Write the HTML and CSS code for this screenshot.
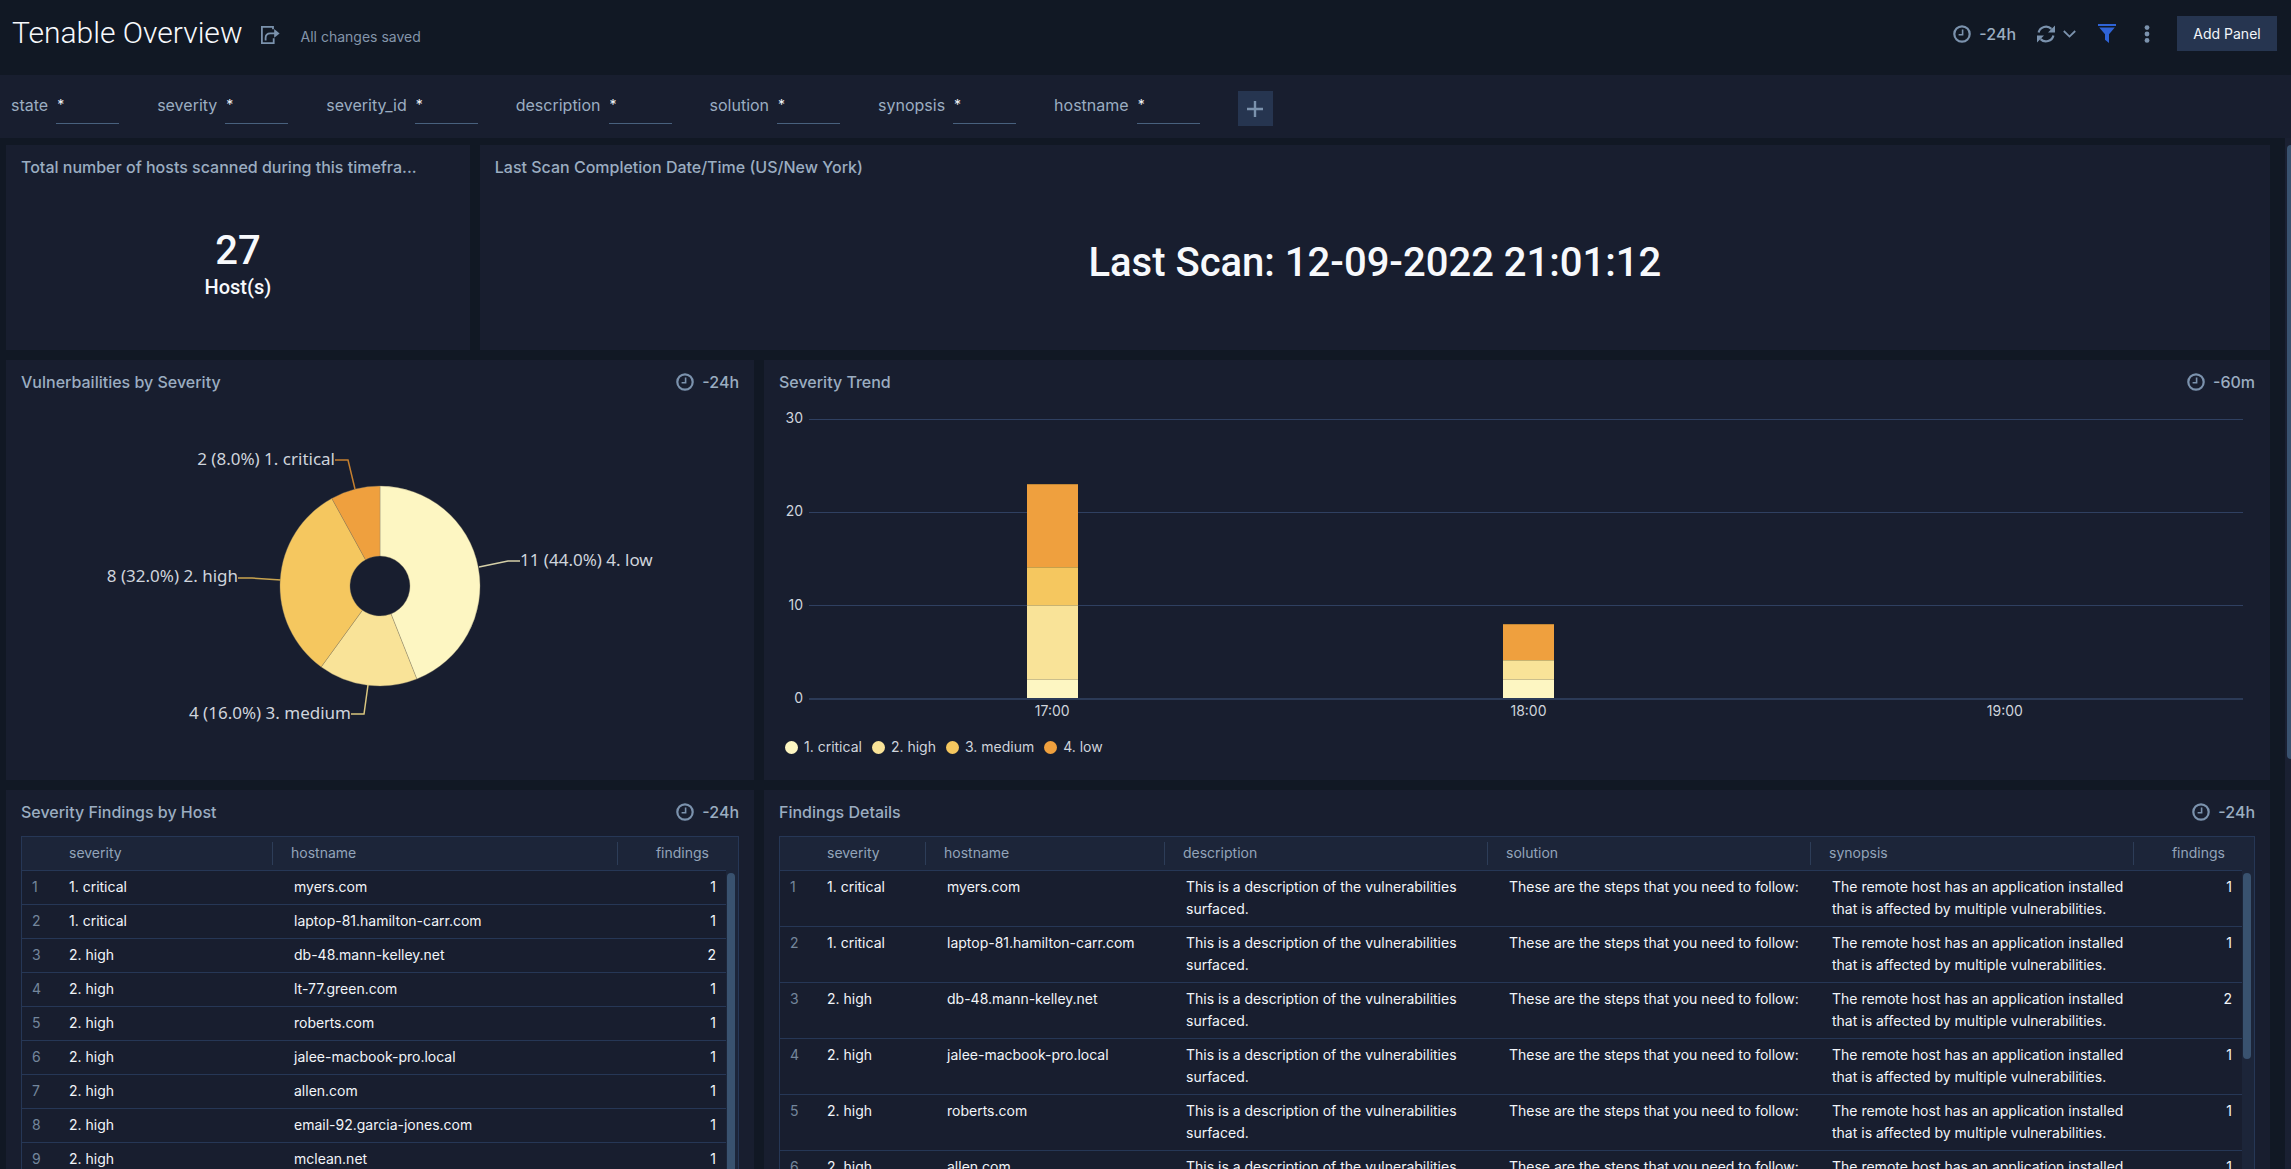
FILE: index.html
```
<!DOCTYPE html>
<html lang="en">
<head>
<meta charset="utf-8">
<meta name="viewport" content="width=device-width, initial-scale=1">
<title>Tenable Overview</title>
<link rel="stylesheet" href="styles.css">
</head>
<body>
<svg class="sprite" aria-hidden="true">
  <symbol id="clock" viewBox="0 0 18 18">
    <circle cx="9" cy="9" r="7.7" fill="none" stroke="currentColor" stroke-width="2.2"/>
    <path d="M9.6 4.6V9.7H5.6" fill="none" stroke="currentColor" stroke-width="1.6"/>
  </symbol>
</svg>

<header class="topbar">
  <h1 class="topbar-title">Tenable Overview</h1>
  <button class="icon-button share" type="button" aria-label="Share">
    <svg width="19" height="18" viewBox="0 0 19 18" fill="none" stroke="currentColor" stroke-width="1.8">
      <path d="M12 3.2V.9H.9V17.1H12.7V12.2"/>
      <path d="M4.6 14.6V12C4.6 9 6.4 7.4 9.4 7.4H14"/>
      <path d="M13.2 2.9 18.6 7.4 13.2 11.8Z" fill="currentColor" stroke="none"/>
    </svg>
  </button>
  <span class="save-state">All changes saved</span>
  <div class="topbar-actions">
    <button class="time-button" type="button"><svg class="clock"><use href="#clock"/></svg>-24h</button>
    <button class="icon-button refresh" type="button" aria-label="Refresh">
      <svg width="18" height="18" viewBox="0 0 18 18" fill="none" stroke="currentColor" stroke-width="2.2">
        <path d="M1.6 7.6A7.6 7.6 0 0 1 14.4 3.9"/>
        <path d="M16.4 10.4A7.6 7.6 0 0 1 3.6 14.1"/>
        <path d="M18 .4V7.4H11Z" fill="currentColor" stroke="none"/>
        <path d="M0 17.6V10.6H7Z" fill="currentColor" stroke="none"/>
      </svg>
      <svg width="13" height="8" viewBox="0 0 13 8" fill="none" stroke="currentColor" stroke-width="1.8"><path d="M.8 1 6.5 6.6 12.2 1"/></svg>
    </button>
    <button class="icon-button funnel" type="button" aria-label="Filters">
      <svg width="18" height="19" viewBox="0 0 18 19" fill="currentColor"><path d="M0 0H18V2H0ZM1.2 3.6H16.8L11 10.2V19L7 15.8V10.2Z"/></svg>
    </button>
    <button class="icon-button kebab" type="button" aria-label="More">
      <svg width="6" height="18" viewBox="0 0 6 18" fill="currentColor"><circle cx="3" cy="2.6" r="2.4"/><circle cx="3" cy="9" r="2.4"/><circle cx="3" cy="15.4" r="2.4"/></svg>
    </button>
    <button class="add-panel" type="button">Add Panel</button>
  </div>
</header>

<form class="filters">
  <div class="filter"><label for="f-state">state</label><input id="f-state" value="*"></div>
  <div class="filter"><label for="f-severity">severity</label><input id="f-severity" value="*"></div>
  <div class="filter"><label for="f-severity-id">severity_id</label><input id="f-severity-id" value="*"></div>
  <div class="filter"><label for="f-description">description</label><input id="f-description" value="*"></div>
  <div class="filter"><label for="f-solution">solution</label><input id="f-solution" value="*"></div>
  <div class="filter"><label for="f-synopsis">synopsis</label><input id="f-synopsis" value="*"></div>
  <div class="filter"><label for="f-hostname">hostname</label><input id="f-hostname" value="*"></div>
  <button class="add-filter" type="button" aria-label="Add filter">
    <svg width="16" height="16" viewBox="0 0 16 16" stroke="currentColor" stroke-width="2.4"><path d="M8 0V16M0 8H16"/></svg>
  </button>
</form>

<main class="dashboard">
  <div class="canvas">
    <section class="panel span-5">
      <header class="panel-head"><h2>Total number of hosts scanned during this timefra...</h2></header>
      <div class="single-value"><span class="value">27</span><span class="unit">Host(s)</span></div>
    </section>
    <section class="panel span-19">
      <header class="panel-head"><h2>Last Scan Completion Date/Time (US/New York)</h2></header>
      <div class="single-value"><span class="value">Last Scan: 12-09-2022 21:01:12</span></div>
    </section>

    <section class="panel span-8">
      <header class="panel-head"><h2>Vulnerbailities by Severity</h2><span class="range"><svg class="clock"><use href="#clock"/></svg>-24h</span></header>
      <svg class="pie" width="716" height="372" viewBox="0 4 716 372">
        <g stroke="#8a8268" stroke-opacity=".35">
          <path fill="#fdf6c2" d="M358 86A100 100 0 0 1 394.8 279L369 213.9A30 30 0 0 0 358 156Z"/>
          <path fill="#f9e398" d="M394.8 279A100 100 0 0 1 299.2 266.9L340.4 210.3A30 30 0 0 0 369 213.9Z"/>
          <path fill="#f5c75f" d="M299.2 266.9A100 100 0 0 1 309.8 98.4L343.5 159.7A30 30 0 0 0 340.4 210.3Z"/>
          <path fill="#efa03e" d="M309.8 98.4A100 100 0 0 1 358 86V156A30 30 0 0 0 343.5 159.7Z"/>
        </g>
        <g fill="none" stroke-width="1.5">
          <path stroke="#c47f2f" d="M313 60H326L333 89"/>
          <path stroke="#d5d0a8" d="M498 161H486L457 167"/>
          <path stroke="#c9a44f" d="M216 178H230L259 180"/>
          <path stroke="#d9c67f" d="M329 314H342L346 285"/>
        </g>
        <g class="pie-labels">
          <text x="313" y="65" text-anchor="end">2 (8.0%) 1. critical</text>
          <text x="498" y="166">11 (44.0%) 4. low</text>
          <text x="216" y="182" text-anchor="end">8 (32.0%) 2. high</text>
          <text x="329" y="319" text-anchor="end">4 (16.0%) 3. medium</text>
        </g>
      </svg>
    </section>

    <section class="panel span-16">
      <header class="panel-head"><h2>Severity Trend</h2><span class="range"><svg class="clock"><use href="#clock"/></svg>-60m</span></header>
      <div class="chart">
        <div class="y-axis"><span>30</span><span>20</span><span>10</span><span>0</span></div>
        <div class="plot">
          <div class="grid-lines"><i></i><i></i><i></i></div>
          <div class="slot">
            <div class="bar" style="height:76.7%">
              <i class="c4" style="flex-grow:9"></i><i class="c3" style="flex-grow:4"></i><i class="c2" style="flex-grow:8"></i><i class="c1" style="flex-grow:2"></i>
            </div>
          </div>
          <div class="slot">
            <div class="bar" style="height:26.7%">
              <i class="c4" style="flex-grow:4"></i><i class="c2" style="flex-grow:2"></i><i class="c1" style="flex-grow:2"></i>
            </div>
          </div>
          <div class="slot"></div>
        </div>
        <div class="x-axis"><span>17:00</span><span>18:00</span><span>19:00</span></div>
      </div>
      <ul class="legend">
        <li><i class="c1"></i>1. critical</li>
        <li><i class="c2"></i>2. high</li>
        <li><i class="c3"></i>3. medium</li>
        <li><i class="c4"></i>4. low</li>
      </ul>
    </section>

    <section class="panel span-8">
      <header class="panel-head"><h2>Severity Findings by Host</h2><span class="range"><svg class="clock"><use href="#clock"/></svg>-24h</span></header>
      <div class="table-box">
        <table>
          <colgroup><col class="col-index"><col class="col-severity-wide"><col><col class="col-findings"></colgroup>
          <thead><tr><th></th><th>severity</th><th>hostname</th><th>findings</th></tr></thead>
          <tbody>
            <tr><td>1</td><td>1. critical</td><td>myers.com</td><td>1</td></tr>
            <tr><td>2</td><td>1. critical</td><td>laptop-81.hamilton-carr.com</td><td>1</td></tr>
            <tr><td>3</td><td>2. high</td><td>db-48.mann-kelley.net</td><td>2</td></tr>
            <tr><td>4</td><td>2. high</td><td>lt-77.green.com</td><td>1</td></tr>
            <tr><td>5</td><td>2. high</td><td>roberts.com</td><td>1</td></tr>
            <tr><td>6</td><td>2. high</td><td>jalee-macbook-pro.local</td><td>1</td></tr>
            <tr><td>7</td><td>2. high</td><td>allen.com</td><td>1</td></tr>
            <tr><td>8</td><td>2. high</td><td>email-92.garcia-jones.com</td><td>1</td></tr>
            <tr><td>9</td><td>2. high</td><td>mclean.net</td><td>1</td></tr>
          </tbody>
        </table>
        <div class="table-scroll"><i class="thumb thumb-full"></i></div>
      </div>
    </section>

    <section class="panel span-16">
      <header class="panel-head"><h2>Findings Details</h2><span class="range"><svg class="clock"><use href="#clock"/></svg>-24h</span></header>
      <div class="table-box">
        <table>
          <colgroup><col class="col-index"><col class="col-severity"><col class="col-host"><col><col><col><col class="col-findings"></colgroup>
          <thead><tr><th></th><th>severity</th><th>hostname</th><th>description</th><th>solution</th><th>synopsis</th><th>findings</th></tr></thead>
          <tbody>
            <tr><td>1</td><td>1. critical</td><td>myers.com</td><td>This is a description of the vulnerabilities surfaced.</td><td>These are the steps that you need to follow:</td><td>The remote host has an application installed that is affected by multiple vulnerabilities.</td><td>1</td></tr>
            <tr><td>2</td><td>1. critical</td><td>laptop-81.hamilton-carr.com</td><td>This is a description of the vulnerabilities surfaced.</td><td>These are the steps that you need to follow:</td><td>The remote host has an application installed that is affected by multiple vulnerabilities.</td><td>1</td></tr>
            <tr><td>3</td><td>2. high</td><td>db-48.mann-kelley.net</td><td>This is a description of the vulnerabilities surfaced.</td><td>These are the steps that you need to follow:</td><td>The remote host has an application installed that is affected by multiple vulnerabilities.</td><td>2</td></tr>
            <tr><td>4</td><td>2. high</td><td>jalee-macbook-pro.local</td><td>This is a description of the vulnerabilities surfaced.</td><td>These are the steps that you need to follow:</td><td>The remote host has an application installed that is affected by multiple vulnerabilities.</td><td>1</td></tr>
            <tr><td>5</td><td>2. high</td><td>roberts.com</td><td>This is a description of the vulnerabilities surfaced.</td><td>These are the steps that you need to follow:</td><td>The remote host has an application installed that is affected by multiple vulnerabilities.</td><td>1</td></tr>
            <tr><td>6</td><td>2. high</td><td>allen.com</td><td>This is a description of the vulnerabilities surfaced.</td><td>These are the steps that you need to follow:</td><td>The remote host has an application installed that is affected by multiple vulnerabilities.</td><td>1</td></tr>
          </tbody>
        </table>
        <div class="table-scroll"><i class="thumb"></i></div>
      </div>
    </section>
  </div>
  <div class="page-scroll"><i></i></div>
</main>
</body>
</html>
```
FILE: styles.css
```
:root {
  --page: #111824;
  --panel: #181e2f;
  --head: #1c2539;
  --line: #263756;
  --muted: #9badc1;
  --icon: #7b92ad;
  --thumb: #39526f;
  --c1: #fdf6c2;
  --c2: #f9e398;
  --c3: #f5c75f;
  --c4: #efa03e;
}

* { box-sizing: border-box; }

body {
  margin: 0;
  height: 100vh;
  overflow: hidden;
  display: flex;
  flex-direction: column;
  background: var(--page);
  color: #f2f5f9;
  font: 14px/22px Inter, "Liberation Sans", sans-serif;
}

button, input { font: inherit; border: 0; padding: 0; background: none; color: inherit; }
svg { display: block; flex: none; }
.sprite { position: absolute; width: 0; height: 0; }
.clock { width: 18px; height: 18px; color: var(--icon); }

/* top bar */
.topbar {
  display: flex;
  align-items: center;
  flex: none;
  height: 75px;
  padding: 0 14px 10px 12px;
}
.topbar-title { margin: 0; font: 300 30px/40px Roboto, sans-serif; color: #f7f9fc; }
.icon-button { display: flex; align-items: center; color: var(--icon); }
.share { margin: 5px 21px 0 18px; }
.save-state { padding-top: 8px; color: #8495aa; }
.topbar-actions { display: flex; align-items: center; margin-left: auto; padding-top: 2px; }
.time-button { display: flex; align-items: center; gap: 8px; font-size: 16px; font-weight: 500; color: var(--muted); }
.refresh { gap: 8px; margin-left: 21px; }
.funnel { margin-left: 22px; color: #2f63d6; }
.kebab { margin: 0 27px 0 28px; }
.add-panel { width: 100px; height: 35px; background: #263550; color: #f2f5f9; }

/* filters */
.filters {
  display: flex;
  align-items: center;
  flex: none;
  gap: 38px;
  height: 63px;
  padding: 4px 11px 0;
  background: var(--panel);
}
.filter { display: flex; align-items: flex-start; gap: 8px; height: 31px; }
.filter label { font-size: 16px; line-height: 24px; color: var(--muted); }
.filter input { width: 63px; height: 31px; padding: 0 0 7px 1px; border-bottom: 1px solid #48617e; }
.add-filter { display: grid; place-items: center; width: 35px; height: 35px; background: #263550; color: var(--icon); }

/* dashboard */
.dashboard { display: flex; flex: 1; min-height: 0; }
.canvas {
  flex: 1;
  min-width: 0;
  display: grid;
  grid-template-columns: repeat(24, minmax(0, 1fr));
  grid-template-rows: 205px 420px minmax(0, 1fr);
  gap: 10px;
  padding: 7px 15px 0 6px;
}
.page-scroll { flex: none; width: 6px; padding: 7px 0 0 2px; background: #1a2032; }
.page-scroll i { display: block; height: 60%; border-radius: 4px 0 0 4px; background: var(--thumb); }

.panel { display: flex; flex-direction: column; min-width: 0; min-height: 0; background: var(--panel); }
.span-5 { grid-column: span 5; }
.span-8 { grid-column: span 8; }
.span-16 { grid-column: span 16; }
.span-19 { grid-column: span 19; }

.panel-head {
  display: flex;
  align-items: center;
  justify-content: space-between;
  flex: none;
  height: 44px;
  padding: 0 15px;
  color: var(--muted);
  white-space: nowrap;
}
.panel-head h2 { margin: 0; font-size: 16px; font-weight: 500; }
.range { display: flex; align-items: center; gap: 8px; font-size: 16px; font-weight: 500; }

.single-value {
  flex: 1;
  display: flex;
  flex-direction: column;
  align-items: center;
  justify-content: center;
  padding-bottom: 13px;
  font-family: Roboto, sans-serif;
  font-weight: 500;
  color: #f7f9fc;
}
.value { font-size: 40px; line-height: 48px; }
.unit { font-size: 20px; line-height: 24px; }

.pie { align-self: center; }
.pie-labels { font: 17px "Noto Sans", sans-serif; fill: #cfd4dc; }

/* trend chart */
.chart {
  display: grid;
  grid-template-columns: 40px 1fr;
  grid-template-rows: 281px 24px;
  padding: 15px 27px 0 0;
  color: #cfd4dc;
}
.y-axis {
  display: flex;
  flex-direction: column;
  justify-content: space-between;
  margin: -12px 1px -9px 0;
  text-align: right;
}
.plot {
  position: relative;
  display: flex;
  margin-left: 5px;
  padding-left: 5px;
  border-bottom: 2px solid #2b3a57;
}
.grid-lines { position: absolute; inset: 0; display: flex; flex-direction: column; }
.grid-lines i { flex: 1; border-top: 1px solid #2f4061; }
.slot { position: relative; flex: 1; display: flex; align-items: flex-end; justify-content: center; }
.bar { display: flex; flex-direction: column; width: 51px; }
.bar i { flex-basis: 0; border-top: 1px solid rgba(110, 90, 40, .35); }
.x-axis { grid-column: 2; display: flex; padding-left: 10px; text-align: center; }
.x-axis span { flex: 1; }

.c1 { background: var(--c1); }
.c2 { background: var(--c2); }
.c3 { background: var(--c3); }
.c4 { background: var(--c4); }

.legend { display: flex; gap: 10px; margin: 12px 0 0; padding: 0 21px; list-style: none; color: #cfd4dc; }
.legend li { display: flex; align-items: center; gap: 6px; }
.legend i { width: 13px; height: 13px; border-radius: 50%; }

/* tables */
.table-box {
  flex: 1;
  display: flex;
  min-height: 0;
  margin: 2px 15px 0;
  overflow: hidden;
  border: 1px solid var(--line);
  border-bottom: 0;
}
table { flex: 1; width: 100%; align-self: flex-start; table-layout: fixed; border-collapse: separate; border-spacing: 0; }
.col-index { width: 35px; }
.col-severity { width: 110px; }
.col-severity-wide { width: 215px; }
.col-host { width: 239px; }
.col-findings { width: 109px; }
th, td { text-align: left; vertical-align: top; font-weight: 400; border-bottom: 1px solid var(--line); }
th {
  height: 34px;
  padding: 5px 0 6px 19px;
  background: linear-gradient(#2d3d58, #2d3d58) 0 5px / 1px 23px no-repeat var(--head);
  color: #93a4b9;
}
th:nth-child(-n+2) { padding-left: 12px; background: var(--head); }
td { padding: 5px 0 6px 22px; }
td:nth-child(2) { padding-left: 12px; }
td:first-child { padding-left: 10px; color: #74869c; }
th:last-child { padding-right: 17px; text-align: right; }
td:last-child { padding-right: 10px; text-align: right; }
.table-scroll { flex: none; width: 12px; padding: 36px 3px 0 1px; background: var(--head); }
.thumb { display: block; height: 186px; border-radius: 4px; background: var(--thumb); }
.thumb-full { height: 120%; }
```
